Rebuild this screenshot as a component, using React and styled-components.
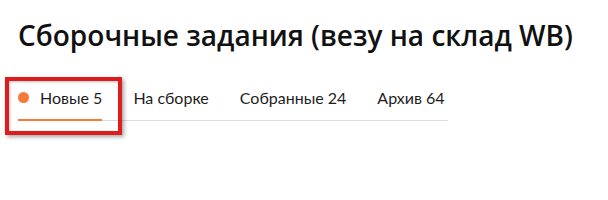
import React from 'react'
import styled, { createGlobalStyle } from 'styled-components'

const GlobalStyle = createGlobalStyle`
  html, body, #root {
    min-height: 100%;
    height: 100%;
  }
  body {
    margin: 0;
    background: #ffffff;
    font-family: Lato, "Noto Sans", sans-serif;
  }
`

const tabs = [
  { id: 'new', title: 'Новые', count: 5, dot: true },
  { id: 'assembly', title: 'На сборке' },
  { id: 'done', title: 'Собранные', count: 24 },
  { id: 'archive', title: 'Архив', count: 64 },
]

const App = () => {
  const active = 'new'
  return (
    <Page>
      <GlobalStyle />
      <Title>Сборочные задания (везу на склад WB)</Title>
      <TabsWrap>
        <TabList>
          {tabs.map((tab) => (
            <Tab key={tab.id} active={tab.id === active}>
              {tab.dot && <Dot />}
              <span>
                {tab.title}
                {tab.count !== undefined ? ` ${tab.count}` : ''}
              </span>
            </Tab>
          ))}
        </TabList>
        <Highlight />
      </TabsWrap>
    </Page>
  )
}

const Page = styled.div`
  min-height: 200px;
  padding: 17px 0 0 18px;
  box-sizing: border-box;
`

const Title = styled.h1`
  margin: 0;
  font-family: "Open Sans", Lato, sans-serif;
  font-weight: 600;
  font-size: 28px;
  line-height: 37px;
  color: #111111;
`

const TabsWrap = styled.div`
  position: relative;
  margin-top: 31px;
  width: 430px;
`

const TabList = styled.div`
  display: flex;
  gap: 31px;
  border-bottom: 1px solid #dcdcdc;
`

const Tab = styled.div`
  display: flex;
  align-items: center;
  gap: 11px;
  height: 36px;
  padding-bottom: 10px;
  box-sizing: border-box;
  font-size: 16px;
  color: #1e1e1e;
  margin-bottom: -1px;
  border-bottom: 2px solid ${(p) => (p.active ? '#f4793b' : 'transparent')};
`

const Dot = styled.span`
  width: 11px;
  height: 11px;
  border-radius: 50%;
  background: #f4793b;
`

const Highlight = styled.div`
  position: absolute;
  left: -13px;
  top: -8px;
  width: 117px;
  height: 58px;
  box-sizing: border-box;
  border: 4px solid #dd1c1c;
  box-shadow: 2px 2px 4px rgba(0, 0, 0, 0.35), inset 1px 1px 3px rgba(0, 0, 0, 0.25);
  pointer-events: none;
`

export default App
